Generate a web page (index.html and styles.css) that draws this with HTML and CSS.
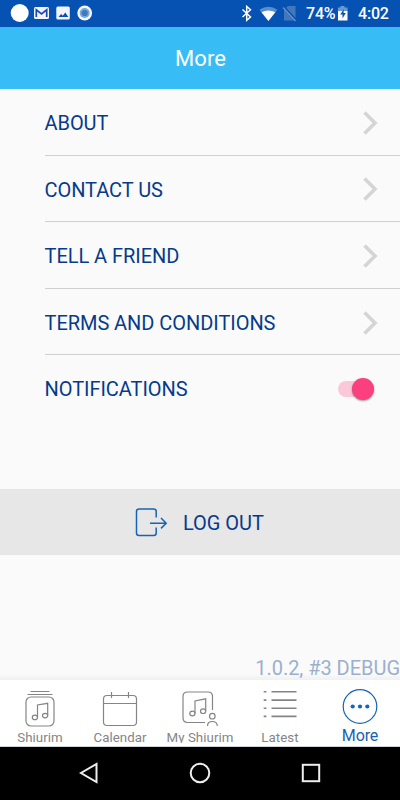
FILE: index.html
```html
<!DOCTYPE html>
<html lang="en">
<head>
<meta charset="utf-8">
<title>More</title>
<link rel="stylesheet" href="styles.css">
</head>
<body>
<div class="app">
  <div class="status">
    <svg class="status-left" width="100" height="26" viewBox="0 0 100 26">
      <circle cx="19.7" cy="13" r="9" fill="#fff"/>
      <rect x="34" y="7" width="15" height="12" rx="1.5" fill="#f3f4fb"/>
      <path d="M36.3 17V9.8L41.5 14l5.2-4.2V17" fill="none" stroke="#1b4bab" stroke-width="1.7"/>
      <rect x="56.3" y="6.5" width="13.5" height="13" rx="1.5" fill="#f3f4fb"/>
      <path d="M58.5 17l2.6-3 1.7 1.8 2.5-3.2 3 4.4z" fill="#0552b2"/>
      <circle cx="84.7" cy="13" r="7.4" fill="#f3f7fc"/>
      <circle cx="84.7" cy="13" r="5" fill="#78a6df"/>
      <circle cx="84.7" cy="13" r="3.1" fill="#4179bd"/>
    </svg>
    <div class="status-right">
      <svg width="60" height="26" viewBox="0 0 60 26">
        <path d="M2.5 9.5l8 7.5-3.8 3.4V6.4l3.8 3.4-8 7.2M1.7 13.3h.1M11.5 13.3h.1" fill="none" stroke="#fff" stroke-width="1.5"/>
        <path d="M19.4 9.8q9-6 18 0L28.4 21z" fill="#5a8dcc"/>
        <path d="M21.5 12.3q6.900-3.800 13.800 0L28.4 21z" fill="#fff"/>
        <path d="M48 6h7.5v14.5H44V10z" fill="#4377bc"/>
        <path d="M43.5 7L56 20.5" stroke="#0550ad" stroke-width="2.6"/>
        <path d="M43 7.5L55.5 21" stroke="#6f98ce" stroke-width="1.2"/>
      </svg>
      <span class="percent">74%</span>
      <svg class="battery" width="12" height="26" viewBox="0 0 12 26">
        <path d="M3.5 6h4v1.500h3V12H1V7.500h2.500z" fill="#6899d4"/>
        <path d="M1 11h9.500v9.500H1z" fill="#fff"/>
        <path d="M7 9l-3.800 5.500h2.300V18.500l3.300-5.500H6.500z" fill="#0552b2"/>
      </svg>
      <span class="time">4:02</span>
    </div>
  </div>
  <header class="header"><h1>More</h1></header>
  <main class="content">
    <ul class="menu">
      <li><span class="label">ABOUT</span><svg class="chevron" width="16" height="26" viewBox="0 0 16 26"><path d="M2.500 2.500L13 13 2.500 23.500"/></svg></li>
      <li><span class="label">CONTACT US</span><svg class="chevron" width="16" height="26" viewBox="0 0 16 26"><path d="M2.500 2.500L13 13 2.500 23.500"/></svg></li>
      <li><span class="label">TELL A FRIEND</span><svg class="chevron" width="16" height="26" viewBox="0 0 16 26"><path d="M2.500 2.500L13 13 2.500 23.500"/></svg></li>
      <li><span class="label">TERMS AND CONDITIONS</span><svg class="chevron" width="16" height="26" viewBox="0 0 16 26"><path d="M2.500 2.500L13 13 2.500 23.500"/></svg></li>
      <li><span class="label">NOTIFICATIONS</span><span class="switch"><span class="knob"></span></span></li>
    </ul>
    <div class="logout">
      <svg width="34" height="30" viewBox="0 0 34 30" fill="none" stroke="#1765b0" stroke-width="1.5">
        <path d="M21.2 9.500V3.500q0-2.500-2.500-2.500H4Q1.500 1 1.500 3.500v21.500Q1.500 27.500 4 27.500h14.700q2.500 0 2.500-2.500v-5.500"/>
        <path d="M15 15.200h16.200M26 10l5.200 5.200-5.200 5.200"/>
      </svg>
      <span class="label">LOG OUT</span>
    </div>
    <div class="version">1.0.2, #3 DEBUG</div>
  </main>
  <nav class="tabs">
    <div class="tab">
      <svg width="44" height="44" viewBox="0 0 44 44">
        <path d="M12.500 11.500h19M9.500 14.500h25"/>
        <rect x="8" y="17" width="28" height="29" rx="5"/>
        <path d="M19.500 37.300V25l10.200-1.700v12.200"/>
        <ellipse cx="16.900" cy="37.400" rx="2.600" ry="2.200"/><ellipse cx="27.100" cy="35.600" rx="2.600" ry="2.200"/>
      </svg>
      <span>Shiurim</span>
    </div>
    <div class="tab">
      <svg width="44" height="44" viewBox="0 0 44 44">
        <rect x="5.500" y="15.500" width="33" height="30" rx="3.500"/>
        <path d="M5.500 23.500h33M13.500 12v6M30.500 12v6"/>
      </svg>
      <span>Calendar</span>
    </div>
    <div class="tab clipped">
      <svg width="44" height="44" viewBox="0 0 44 44">
        <path d="M34.500 30V16.500q0-4.500-4.500-4.500H9.500Q5 12 5 16.500v21Q5 42.500 9.500 42.500H27"/>
        <path d="M17 33.500V21l10.700-2.200v12.200"/>
        <ellipse cx="14.400" cy="33.500" rx="2.600" ry="2.300"/><ellipse cx="25.100" cy="31.200" rx="2.600" ry="2.300"/>
        <circle cx="34.300" cy="36.200" r="2.800"/><path d="M29.500 46q0-4.500 4.800-4.500t5 4.500"/>
      </svg>
      <span>My Shiurim</span>
    </div>
    <div class="tab">
      <svg class="list" width="44" height="44" viewBox="0 0 44 44">
        <path d="M13.500 11.800h25M13.500 20.100h25M13.500 28.300h25M13.500 36.400h25M5.700 11.800h2.700M5.700 20.100h2.700M5.700 28.300h2.700M5.700 36.400h2.700"/>
      </svg>
      <span>Latest</span>
    </div>
    <div class="tab active">
      <svg width="44" height="44" viewBox="0 0 44 44">
        <circle cx="22" cy="26.500" r="16.800"/>
        <g class="dots"><circle cx="14.700" cy="26.500" r="2.100"/><circle cx="22" cy="26.500" r="2.100"/><circle cx="29.300" cy="26.500" r="2.100"/></g>
      </svg>
      <span>More</span>
    </div>
  </nav>
  <div class="system-nav">
    <svg width="22" height="24" viewBox="0 0 22 24"><path d="M18.500 3v18L3 12z"/></svg>
    <svg width="22" height="24" viewBox="0 0 22 24"><circle cx="11" cy="12" r="9.300"/></svg>
    <svg width="22" height="24" viewBox="0 0 22 24"><rect x="2.800" y="3.800" width="16.400" height="16.400"/></svg>
  </div>
</div>
</body>
</html>
```
FILE: styles.css
```css
* { box-sizing: border-box; }
body { margin: 0; font-family: Roboto, "Liberation Sans", sans-serif; background: #fafafa; }
svg { display: block; flex: none; overflow: visible; }
.app { width: 400px; height: 800px; display: flex; flex-direction: column; overflow: hidden; }
.status { height: 26.5px; flex: none; background: #0552b2; display: flex; justify-content: space-between; color: #fff; font-size: 16px; font-weight: 500; line-height: 28px; }
.status-right { display: flex; width: 160px; white-space: nowrap; }
.percent { margin-left: 6px; width: 30px; letter-spacing: -.2px; }
.battery { margin-left: 1px; }
.time { margin-left: 9px; letter-spacing: -.2px; }
.header { height: 62.5px; flex: none; background: #38bcf5; display: flex; align-items: center; justify-content: center; }
.header h1 { margin: 3px 0 0 1px; color: #fff; font-size: 22px; font-weight: 400; line-height: 26px; letter-spacing: .1px; }
.content { height: 591px; flex: none; display: flex; flex-direction: column; background: #fafafa; }
.menu { list-style: none; margin: 0 0 0 44.5px; padding: 0; }
.menu li { height: 66.6px; display: flex; align-items: center; justify-content: space-between; padding: 2px 22px 0 0; border-bottom: 1.5px solid #d0d0d0; }
.menu li:last-child { border-bottom: 0; padding: 0 26px 0 0; }
.label { color: #063a8c; font-size: 20px; line-height: 24px; letter-spacing: -.05px; white-space: nowrap; }
.menu li:not(:last-child) .label { padding-top: 1px; }
.chevron { fill: none; stroke: #d5d5d5; stroke-width: 3.6; }
.switch { width: 36px; height: 16px; border-radius: 8px; background: #fbc8da; display: flex; align-items: center; justify-content: flex-end; }
.knob { width: 22px; height: 22px; flex: none; border-radius: 50%; background: #fb3f7f; box-shadow: 0 1px 2px rgba(0,0,0,.4); }
.logout { margin-top: 67px; height: 66.5px; background: #e7e7e7; display: flex; align-items: center; padding: 1px 0 0 135px; gap: 14px; }
.version { margin-top: auto; height: 24px; text-align: right; font-size: 20px; line-height: 24px; letter-spacing: -.03px; color: #9ab0d0; white-space: nowrap; background: linear-gradient(#fafafa 75%, #f0f0f0); }
.tabs { height: 67px; flex: none; background: #fff; display: flex; border-bottom: 1px solid #cdd3d7; }
.tab { width: 80px; height: 66px; display: flex; flex-direction: column; align-items: center; color: #858585; font-size: 13.3px; line-height: 16px; letter-spacing: .05px; white-space: nowrap; }
.tab.clipped { height: 63px; overflow: hidden; }
.tab svg { fill: none; stroke: #858585; stroke-width: 1.2; }
.tab .list { stroke-width: 1.6; }
.tab span { margin-top: 6px; }
.tab.active { color: #1563b5; font-size: 16px; line-height: 18px; letter-spacing: -.1px; }
.tab.active svg { stroke: #1765b8; }
.tab .dots { fill: #1765b8; stroke: none; }
.tab.active span { margin-top: 3px; }
.system-nav { height: 53px; flex: none; background: #000; display: flex; align-items: center; justify-content: space-between; padding: 0 78px 1px; }
.system-nav svg { fill: none; stroke: #eee; stroke-width: 2; }
```
